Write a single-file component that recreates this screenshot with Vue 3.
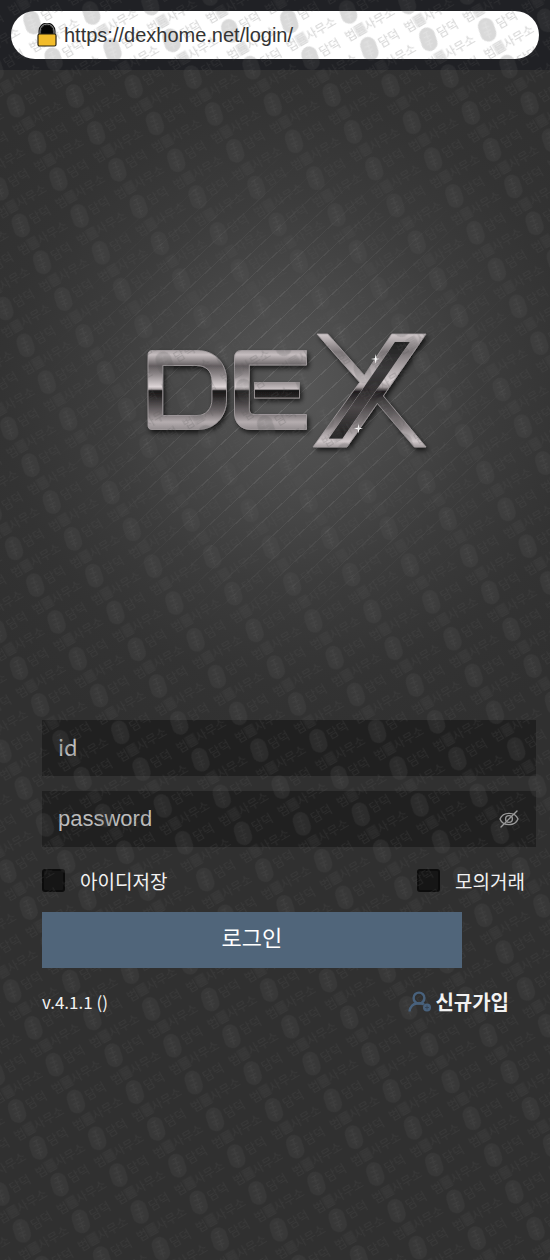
<script setup>
import { ref } from 'vue'

const endereco = ref('https://dexhome.net/login/')
const id = ref('')
const senha = ref('')
const salvarId = ref(false)
const simulado = ref(false)
const mostrarSenha = ref(false)

// posições da marca d'água dentro de um bloco do padrão
const marcas = [
  { x: 0, y: 0 },
  { x: 111.5, y: 0 },
  { x: 0, y: 42.5 },
  { x: 111.5, y: 42.5 },
  { x: -55.75, y: 21.25 },
  { x: 55.75, y: 21.25 },
]

const entrar = () => {
  if (id.value.trim() === '' || senha.value === '') return
  console.log(id.value, salvarId.value, simulado.value)
}
</script>

<template>
  <div class="pagina">
    <header class="topo">
      <label class="barra">
        <svg class="cadeado" viewBox="0 0 22 24" aria-hidden="true">
          <path d="M5 12V8a6 6 0 0 1 12 0v4z" fill="#050505" />
          <path d="M4 12V8a7 7 0 0 1 14 0v4" fill="none" stroke="#111" stroke-width="3" />
          <path d="M4 12V8a7 7 0 0 1 14 0v4" fill="none" stroke="#999" stroke-width="1" />
          <rect x="2" y="11" width="18" height="12" rx="1.5" fill="#f2bc2b" stroke="#2a2414" stroke-width="1.2" />
        </svg>
        <input class="url" type="text" v-model="endereco" aria-label="URL" />
      </label>
    </header>

    <main class="conteudo">
      <svg class="logo" viewBox="140 325 300 135" role="img" aria-label="DEX">
        <defs>
          <linearGradient id="metal" gradientUnits="userSpaceOnUse" x1="0" y1="350" x2="0" y2="430">
            <stop offset="0" stop-color="#a69fa1" />
            <stop offset="0.06" stop-color="#c6bec0" />
            <stop offset="0.2" stop-color="#625d5f" />
            <stop offset="0.3" stop-color="#8b8587" />
            <stop offset="0.46" stop-color="#ddd5d7" />
            <stop offset="0.49" stop-color="#a9a2a4" />
            <stop offset="0.51" stop-color="#1a1919" />
            <stop offset="0.57" stop-color="#262424" />
            <stop offset="0.78" stop-color="#746e70" />
            <stop offset="0.9" stop-color="#b5adaf" />
            <stop offset="1" stop-color="#918b8d" />
          </linearGradient>
          <linearGradient id="metalX" gradientUnits="userSpaceOnUse" x1="0" y1="334" x2="0" y2="447">
            <stop offset="0" stop-color="#d0c8ca" />
            <stop offset="0.16" stop-color="#7c7678" />
            <stop offset="0.42" stop-color="#d6ced0" />
            <stop offset="0.47" stop-color="#a59d9f" />
            <stop offset="0.51" stop-color="#1d1b1c" />
            <stop offset="0.6" stop-color="#403d3e" />
            <stop offset="0.82" stop-color="#8d8688" />
            <stop offset="0.95" stop-color="#d0c8ca" />
            <stop offset="1" stop-color="#a19a9c" />
          </linearGradient>
          <linearGradient id="barraE" x1="0" y1="0" x2="0" y2="1">
            <stop offset="0" stop-color="#9b9496" />
            <stop offset="0.42" stop-color="#c9c1c3" />
            <stop offset="0.52" stop-color="#151414" />
            <stop offset="1" stop-color="#2b2929" />
          </linearGradient>
          <linearGradient id="vao" x1="0" y1="0" x2="0" y2="1">
            <stop offset="0" stop-color="#222" />
            <stop offset="0.3" stop-color="#3c3b3c" />
            <stop offset="0.5" stop-color="#2e2b2c" />
            <stop offset="0.68" stop-color="#4a4647" />
            <stop offset="1" stop-color="#1f1f1f" />
          </linearGradient>
          <filter id="sombra" x="-10%" y="-10%" width="120%" height="130%">
            <feDropShadow dx="2" dy="3" stdDeviation="2.5" flood-color="#000" flood-opacity="0.7" />
          </filter>
        </defs>
        <g filter="url(#sombra)" stroke="#a8a2a4" stroke-width="0.8">
          <path
            fill="url(#metal)"
            fill-rule="evenodd"
            d="M153 350.5H198C216 350.5 227.5 363 227.5 381V399C227.5 417 216 429.5 198 429.5H153Q149 429.5 149 425V355Q149 350.5 153 350.5ZM163.7 365.5V415.5H198C207 415.5 213 409 213 399V381C213 371 207 365.5 198 365.5Z"
          />
          <path
            fill="url(#metal)"
            d="M242 350.5H307.5V365H250.3V409Q250.3 414.5 255 414.5H307.5V429.5H252C241 429.5 235.5 422 235.5 413V358Q235.5 350.5 242 350.5Z"
          />
          <rect x="255.5" y="382.5" width="45" height="15.5" fill="url(#barraE)" />
          <path
            fill="url(#metalX)"
            fill-rule="evenodd"
            d="M318 334H328.7L365.3 375.3L392.7 334H427L384.3 396L427 447H415.3L378.3 403.3L348 447H314L360.7 382.3ZM396 342L330 438.5H343.3L410.7 342Z"
          />
          <path d="M396 342L330 438.5H343.3L410.7 342Z" fill="url(#vao)" stroke="none" />
        </g>
        <g fill="#fff">
          <path d="M376.7 354L377.5 358.2L381 359L377.5 359.8L376.7 364L375.9 359.8L372 359L375.9 358.2Z" />
          <path d="M359.5 423.5L360.3 427.7L364 428.5L360.3 429.3L359.5 433.5L358.7 429.3L355 428.5L358.7 427.7Z" />
        </g>
      </svg>

      <form class="login" @submit.prevent="entrar">
        <input class="campo campo-id" type="text" placeholder="id" aria-label="id" v-model="id" />
        <div class="senha">
          <input
            class="campo"
            :type="mostrarSenha ? 'text' : 'password'"
            placeholder="password"
            aria-label="password"
            v-model="senha"
          />
          <button
            type="button"
            class="olho"
            aria-label="password"
            :aria-pressed="mostrarSenha"
            @click="mostrarSenha = !mostrarSenha"
          >
            <svg viewBox="0 0 20 20" fill="none" stroke="#999" stroke-width="1.4" stroke-linecap="round">
              <path d="M1 10C4 2.5 16 2.5 19 10C16 17.5 4 17.5 1 10Z" />
              <circle cx="10" cy="10" r="3.4" />
              <path d="M18 2L2 18" />
            </svg>
          </button>
        </div>

        <div class="opcoes">
          <label class="opcao">
            <input type="checkbox" v-model="salvarId" />
            <span>아이디저장</span>
          </label>
          <label class="opcao">
            <input type="checkbox" v-model="simulado" />
            <span>모의거래</span>
          </label>
        </div>

        <button type="submit" class="entrar">로그인</button>

        <div class="rodape">
          <span class="versao">v.4.1.1 ()</span>
          <a href="#" class="cadastro">
            <svg viewBox="0 0 24 22" aria-hidden="true" fill="none" stroke="#48617c" stroke-width="2.4">
              <circle cx="11" cy="7" r="5.4" />
              <path d="M1.5 20.5C2 15.5 5.5 12.5 9 12.5H13Q15 12.5 16 13.5" />
              <circle cx="19" cy="16.5" r="4" fill="#48617c" stroke="none" />
              <path d="M17 16.5H21M19 14.5V18.5" stroke="#33404e" stroke-width="0.8" />
            </svg>
            <span>신규가입</span>
          </a>
        </div>
      </form>
    </main>

    <svg class="marca-dagua" aria-hidden="true">
      <defs>
        <g id="marca">
          <rect x="-8" y="-12" width="16" height="24" rx="8" transform="rotate(12)" />
          <path
            d="M-3 -7L2 -8M-4 -3H3M0 -8V0M-4 2L3 1M-3 5H3M0 2V9"
            fill="none"
            stroke="#999"
            stroke-opacity="0.5"
            transform="rotate(12)"
          />
          <text x="11" y="5">담덕</text>
          <text x="41" y="5">법률사무소</text>
          <rect x="52" y="-6" width="11" height="12" fill-opacity="0.6" />
        </g>
        <pattern
          id="fundo"
          width="111.5"
          height="42.5"
          patternUnits="userSpaceOnUse"
          patternTransform="translate(17 1111) rotate(-30)"
        >
          <use v-for="(m, i) in marcas" :key="i" href="#marca" :x="m.x" :y="m.y" />
        </pattern>
      </defs>
      <rect width="100%" height="100%" fill="url(#fundo)" />
    </svg>
  </div>
</template>

<style>
body {
  margin: 0;
  background: #303030;
}
</style>

<style scoped>
.pagina {
  position: relative;
  min-height: 100vh;
  box-sizing: border-box;
  overflow: hidden;
  color: #f2f2f2;
  font-family: 'Noto Sans CJK KR', sans-serif;
  background: radial-gradient(circle at 53% 392px, #585858 0, #4b4b4b 90px, #3c3c3c 190px, #333 290px, #303030 380px);
}

.pagina::before {
  content: '';
  position: absolute;
  inset: 70px 0 auto 0;
  height: 640px;
  background: repeating-linear-gradient(137deg, transparent 0 16px, rgba(255, 255, 255, 0.1) 16px 17px);
  mask-image: radial-gradient(circle at 53% 322px, #000 60px, transparent 250px);
}

.topo {
  position: relative;
  padding: 11px;
  background: #202125;
}

.barra {
  display: flex;
  align-items: center;
  gap: 6px;
  height: 48px;
  padding: 0 25px;
  border-radius: 24px;
  background: #fff;
}

.cadeado {
  position: relative;
  z-index: 2;
  width: 22px;
  height: 24px;
}

.url {
  position: relative;
  z-index: 2;
  flex: 1;
  min-width: 0;
  padding: 0;
  border: none;
  outline: none;
  background: none;
  color: #333;
  font: 20px/24px 'Liberation Sans', sans-serif;
}

.conteudo {
  position: relative;
  display: flex;
  flex-direction: column;
  padding: 255px 14px 40px 42px;
}

.logo {
  align-self: center;
  width: 300px;
  height: 135px;
  margin-bottom: 260px;
}

.login {
  display: flex;
  flex-direction: column;
}

.campo {
  width: 100%;
  height: 56px;
  box-sizing: border-box;
  padding: 0 16px;
  border: none;
  outline: none;
  background: #202020;
  color: #ddd;
  font: 22px 'Liberation Sans', sans-serif;
}

.campo-id {
  margin-bottom: 15px;
  padding-bottom: 4px;
  font-family: 'Noto Sans CJK KR', sans-serif;
}

.campo::placeholder {
  color: #bcbcbc;
  opacity: 1;
}

.senha {
  position: relative;
  display: flex;
}

.olho {
  position: absolute;
  right: 17px;
  top: 18px;
  z-index: 2;
  width: 20px;
  height: 20px;
  padding: 0;
  border: none;
  background: none;
  cursor: pointer;
}

.olho svg {
  display: block;
}

.opcoes {
  display: flex;
  justify-content: space-between;
  padding: 20px 11px 18px 0;
}

.opcao {
  display: flex;
  align-items: center;
  gap: 15px;
  height: 27px;
  font-size: 19px;
  cursor: pointer;
}

.opcao span,
.rodape {
  position: relative;
  z-index: 2;
}

.opcao input {
  appearance: none;
  width: 23px;
  height: 23px;
  margin: 0;
  border: 2px solid #0c0c0c;
  border-radius: 3px;
  background: #161616;
}

.opcao input:checked {
  background: #50657a;
}

.entrar {
  position: relative;
  z-index: 2;
  width: 85%;
  height: 56px;
  padding: 0 0 8px;
  border: none;
  background: #50657a;
  color: #fff;
  font: 22px 'Noto Sans CJK KR', sans-serif;
  cursor: pointer;
}

.rodape {
  display: flex;
  justify-content: space-between;
  align-items: center;
  padding: 19px 27px 0 0;
  line-height: 30px;
}

.versao {
  font-size: 17px;
}

.cadastro {
  display: flex;
  align-items: center;
  gap: 3px;
  color: #f2f2f2;
  font-size: 20px;
  font-weight: 700;
  text-decoration: none;
}

.cadastro svg {
  width: 24px;
  height: 22px;
}

.marca-dagua {
  position: absolute;
  inset: 0;
  z-index: 1;
  width: 100%;
  height: 100%;
  pointer-events: none;
  fill: #585858;
  opacity: 0.22;
  font-size: 12px;
  font-weight: 500;
}
</style>
